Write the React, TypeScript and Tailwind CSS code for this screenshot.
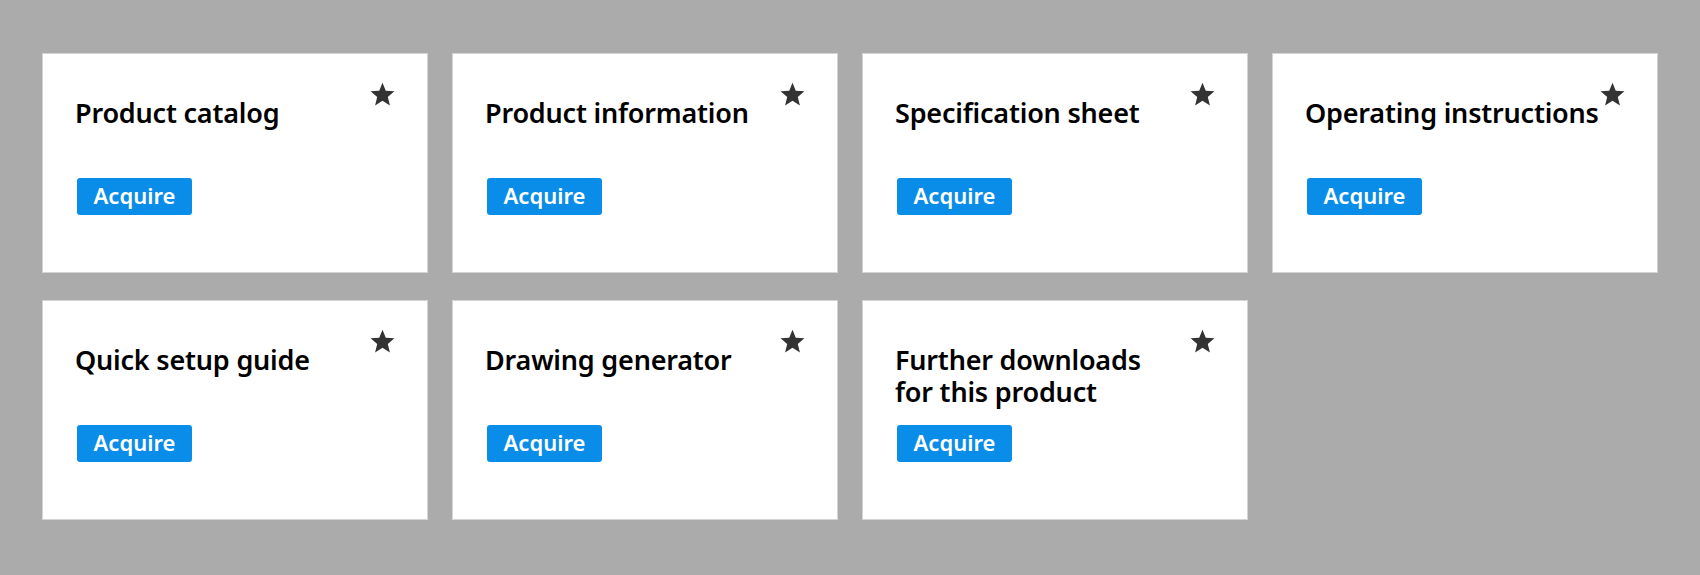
const items = [
  'Product catalog',
  'Product information',
  'Specification sheet',
  'Operating instructions',
  'Quick setup guide',
  'Drawing generator',
  'Further downloads\nfor this product',
];

function Star() {
  return (
    <svg viewBox="0 0 24 24" className="h-[27px] w-[27px]" fill="#333333">
      <polygon points="12,1.5 14.9,8.6 22.6,9.2 16.7,14.2 18.6,21.7 12,17.6 5.4,21.7 7.3,14.2 1.4,9.2 9.1,8.6" />
    </svg>
  );
}

function DownloadCard({ title }: { title: string }) {
  return (
    <div className="relative h-[220px] border border-[#d4d4d4] bg-white">
      <div className="absolute right-[31px] top-[27px]">
        <Star />
      </div>
      <div className="pl-[32px] pr-[20px] pt-[43px]">
        <h3 className="h-[81px] whitespace-pre-line text-[27px] font-semibold leading-[32px] tracking-[-0.2px] text-black">
          {title}
        </h3>
        <button className="ml-[2px] h-[37px] w-[115px] rounded-[3px] bg-[#0a8de9] pb-[3px] text-[22px] font-semibold text-white">
          Acquire
        </button>
      </div>
    </div>
  );
}

export default function App() {
  return (
    <div
      className="min-h-[575px] bg-[#ababab] px-[42px] pt-[53px] pb-[55px]"
      style={{ fontFamily: '"Noto Sans", "Open Sans", sans-serif' }}
    >
      <div className="grid grid-cols-4 gap-x-[24px] gap-y-[27px]">
        {items.map((t) => (
          <DownloadCard key={t} title={t} />
        ))}
      </div>
    </div>
  );
}
